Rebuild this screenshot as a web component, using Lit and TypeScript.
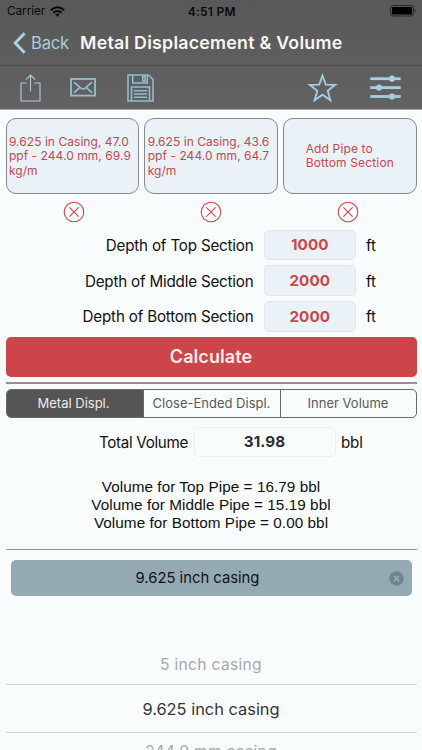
import { LitElement, html, css } from "lit";
import { customElement, state } from "lit/decorators.js";
import { classMap } from "lit/directives/class-map.js";

@customElement("app-header")
class AppHeader extends LitElement {
  static styles = css`
    :host { display: flex; flex-direction: column; height: 110px; box-sizing: border-box;
      background: linear-gradient(#585858, #626262); border-bottom: 1px solid #a8a4a8; flex: none; }
    .status { display: grid; grid-template-columns: 1fr auto 1fr; height: 22px; align-items: center;
      padding: 0 5.5px 0 7px; font-size: 11.8px; color: #0a0a0a; }
    .carrier { display: flex; align-items: center; gap: 5px; letter-spacing: -0.08px; }
    .time { font-weight: 600; font-size: 12px; letter-spacing: 0.25px; }
    .battery { justify-self: end; }
    .nav { display: flex; align-items: center; height: 43px; padding-left: 13px; border-bottom: 1px solid #4c4c4c; }
    .nav span { position: relative; top: -1px; }
    .nav svg { position: relative; top: -1px; }
    .back { color: #a9cddc; font-size: 16.6px; margin-left: 5px; width: 49px; letter-spacing: -0.2px; }
    .title { color: #f8f5f1; font-size: 17.8px; font-weight: 600; white-space: nowrap; letter-spacing: 0.24px; }
    .tools { display: flex; flex: 1; align-items: center; }
    svg { display: block; flex: none; }
    .share { margin-left: 20px; }
    .mail { margin-left: 29px; }
    .save { margin-left: 31px; }
    .star { margin-left: auto; }
    .sliders { margin: 0 21.5px 0 32px; }
  `;
  render() {
    return html`
      <div class="status">
        <div class="carrier"><span>Carrier</span>
          <svg width="15" height="11" viewBox="0 0 15 11"><g fill="none" stroke="#0a0a0a" stroke-width="2">
            <path d="M.8 4.2Q7.5-1.8 14.2 4.2"/><path d="M3.3 6.8Q7.5 3.2 11.7 6.8"/></g>
            <path d="M5.2 8.3Q7.5 6.5 9.8 8.3L7.5 10.8Z" fill="#0a0a0a"/></svg>
        </div>
        <div class="time">4:51 PM</div>
        <svg class="battery" width="27" height="12" viewBox="0 0 27 12">
          <rect x=".6" y=".6" width="22.8" height="10.4" rx="2.6" fill="none" stroke="#262626" stroke-width="1"/>
          <rect x="2" y="2" width="20" height="7.6" rx="1.2" fill="#000"/>
          <path d="M24.7 4Q27 5.8 24.7 7.8Z" fill="#262626"/></svg>
      </div>
      <div class="nav">
        <svg width="13" height="22" viewBox="0 0 13 22"><path d="M11.6 1.2L2.2 11L11.6 20.8" fill="none" stroke="#a9d3e5" stroke-width="2.9"/></svg>
        <span class="back">Back</span><span class="title">Metal Displacement &amp; Volume</span>
      </div>
      <div class="tools">
        <svg class="share" width="21" height="28" viewBox="0 0 21 28"><path d="M6.8 9H1V27H20V9H14.2M10.5 17.5V1M5.8 5.7L10.5 1L15.2 5.7" fill="none" stroke="#a6ccdb" stroke-width="1.15"/></svg>
        <svg class="mail" width="26" height="19" viewBox="0 0 26 19"><g fill="none" stroke="#98bfd0"><rect x="1" y="1" width="24" height="16.6" stroke-width="1.8"/><path d="M4 4.2L10.4 9.8Q13 12 15.6 9.8L22 4.2M4 14.6L9.2 10.2M22 14.6L16.8 10.2" stroke-width="1.7"/></g></svg>
        <svg class="save" width="27" height="28" viewBox="0 0 27 28"><g fill="none" stroke="#94bacb" stroke-width="1.6"><path d="M1 1H21.5L26 5.5V27H1Z"/><path d="M5.7 1V9H20.3V1M15.7 2.6H18.1V7H15.7Z"/><path d="M4.5 26.5V13H22.5V26.5"/><path d="M6.8 16.8H20.2M6.8 20H20.2M6.8 23.2H20.2"/></g></svg>
        <svg class="star" width="31" height="30" viewBox="0 0 31 30"><path d="M15.5 2.5L18.7 11.6L28.3 11.8L20.7 17.8L23.4 27.2L15.5 21.7L7.6 27.2L10.3 17.8L2.7 11.8L12.3 11.6Z" fill="none" stroke="#a5d0e2" stroke-width="1.8"/></svg>
        <svg class="sliders" width="31" height="25" viewBox="0 0 31 25"><g fill="#a5d0e2">
          <rect x=".3" y="2.3" width="30.4" height="2.8"/><circle cx="22" cy="3.7" r="3.1"/>
          <rect x=".3" y="11.2" width="30.4" height="2.8"/><circle cx="9" cy="12.6" r="3.1"/>
          <rect x=".3" y="20.1" width="30.4" height="2.8"/><circle cx="22" cy="21.5" r="3.1"/></g></svg>
      </div>`;
  }
}

@customElement("app-root")
class AppRoot extends LitElement {
  @state() tab = 0;
  pipes = [
    ["9.625 in Casing, 47.0", "ppf - 244.0 mm, 69.9", "kg/m"],
    ["9.625 in Casing, 43.6", "ppf - 244.0 mm, 64.7", "kg/m"],
    ["Add Pipe to", "Bottom Section"],
  ];
  depths = [["Top", "1000"], ["Middle", "2000"], ["Bottom", "2000"]];
  tabs = ["Metal Displ.", "Close-Ended Displ.", "Inner Volume"];

  static styles = css`
    :host { display: flex; flex-direction: column; height: 750px; overflow: hidden; background: #f9fcfd;
      font-family: Inter, "Liberation Sans", sans-serif; color: #111; box-sizing: border-box; }
    svg { display: block; }
    .pipes { display: grid; grid-template-columns: repeat(3, 1fr); gap: 5.4px; padding: 8px 5.5px 0; }
    .pipe { height: 76px; box-sizing: border-box; border: 1px solid #84898e; border-radius: 10px; background: #eaf2f8;
      display: flex; align-items: center; padding: 1px 0 0 2.4px; color: #c6474c; font-size: 12px; line-height: 14.5px; letter-spacing: 0.05px; white-space: nowrap; }
    .pipe.empty { justify-content: center; padding: 0; letter-spacing: 0.15px; }
    .removes { display: grid; grid-template-columns: repeat(3, 1fr); padding: 7px 5.5px 0; justify-items: center; height: 21px; }
    .depths { display: grid; grid-template-columns: 248px 91.5px 1fr; column-gap: 10.5px; row-gap: 5px; padding: 7.5px 0 0 5.5px; align-items: center; font-size: 15.2px; }
    .label { text-align: right; white-space: nowrap; letter-spacing: -0.2px; }
    .unit { padding-top: 1px; }
    .depths .label { padding-top: 1px; }
    .input { height: 30.7px; box-sizing: border-box; border: 1px solid #e1e6eb; border-radius: 5px; display: flex;
      align-items: center; justify-content: center; background: #eaf2f8; color: #c9474b; font-weight: 700; letter-spacing: 0.1px; }
    .calc { margin: 5px 5.5px 0; height: 40.5px; background: #cc4549; border-radius: 5px; color: #fcece8; font-size: 18px; font-weight: 600;
      display: flex; align-items: center; justify-content: center; flex: none; letter-spacing: 0.08px; }
    .rule { height: 1.5px; background: #939196; margin: 5px 5.5px 0; flex: none; }
    .tabs { display: grid; grid-template-columns: 136px 137px 1fr; margin: 5px 5.5px 0; height: 29.5px; box-sizing: border-box; border: 1px solid #69696b; border-radius: 5px; overflow: hidden; flex: none; }
    .tab { display: flex; align-items: center; justify-content: center; font-size: 13px; color: #58585a; white-space: nowrap; }
    .tab + .tab { border-left: 1px solid #69696b; }
    .tab.on { background: #555; color: #ececec; padding-right: 2px; }
    .total { display: grid; grid-template-columns: 182.5px 142px 1fr; column-gap: 5.5px; margin: 8.5px 0 0 5.5px; align-items: center; font-size: 15.2px; }
    .total .label { letter-spacing: -0.32px; padding-top: 1px; }
    .total .unit { letter-spacing: -0.2px; }
    .total .input { background: #f9fcfd; color: #2d2d30; border-color: #edf0f2; }
    .volumes { font-family: "Liberation Sans", Arial, sans-serif; font-size: 15.3px; letter-spacing: 0.05px; line-height: 17.7px; text-align: center; padding-top: 21px; }
    .gap { margin-top: 17.5px; }
    .search { display: grid; grid-template-columns: 1fr 15px; margin: 10px 10.5px 0; height: 36px; border-radius: 5px; background: #94aab2;
      align-items: center; padding-right: 7.5px; text-align: center; font-size: 14.8px; flex: none; box-sizing: border-box; }
    .search span { padding-right: 4.5px; }
    .picker { display: flex; flex-direction: column; margin: 58px 5.5px 0; text-align: center; flex: none; }
    .near { height: 30px; line-height: 22px; font-size: 15.6px; letter-spacing: 0.3px; color: #a6a8ab; box-sizing: border-box; }
    .chosen { height: 49px; box-sizing: border-box; border: solid #d2d5d7; border-width: 1px 0; line-height: 48px; font-size: 16.4px; color: #343436; }
    .next { line-height: 20px; padding-top: 9px; font-size: 15.6px; letter-spacing: 0.3px; color: #a6a8ab; }
  `;
  render() {
    return html`
      <app-header></app-header>
      <div class="pipes">${this.pipes.map((p) => html`
        <div class=${classMap({ pipe: true, empty: p.length === 2 })}><div>${p.map((l) => html`<div>${l}</div>`)}</div></div>`)}</div>
      <div class="removes">${this.pipes.map(() => html`<svg width="22" height="22" viewBox="0 0 22 22">
        <g fill="none" stroke="#cc4549" stroke-width="1.1"><circle cx="11" cy="11" r="9.8"/><path d="M6.4 6.4L15.6 15.6M15.6 6.4L6.4 15.6"/></g></svg>`)}</div>
      <div class="depths">${this.depths.map(([n, v]) => html`
        <div class="label">Depth of ${n} Section</div><div class="input">${v}</div><div class="unit">ft</div>`)}</div>
      <div class="calc">Calculate</div>
      <div class="rule"></div>
      <div class="tabs">${this.tabs.map((t, i) => html`
        <div class=${classMap({ tab: true, on: i === this.tab })} @click=${() => (this.tab = i)}>${t}</div>`)}</div>
      <div class="total"><div class="label">Total Volume</div><div class="input">31.98</div><div class="unit">bbl</div></div>
      <div class="volumes">
        <div>Volume for Top Pipe = 16.79 bbl</div>
        <div>Volume for Middle Pipe = 15.19 bbl</div>
        <div>Volume for Bottom Pipe = 0.00 bbl</div>
      </div>
      <div class="rule gap"></div>
      <div class="search"><span>9.625 inch casing</span>
        <svg width="15" height="15" viewBox="0 0 15 15"><circle cx="7.5" cy="7.5" r="7.2" fill="#71848b"/><path d="M4.8 4.8L10.2 10.2M10.2 4.8L4.8 10.2" stroke="#9fb3ba" stroke-width="1.3"/></svg></div>
      <div class="picker">
        <div class="near">5 inch casing</div>
        <div class="chosen">9.625 inch casing</div>
        <div class="next">244.0 mm casing</div>
      </div>`;
  }
}
